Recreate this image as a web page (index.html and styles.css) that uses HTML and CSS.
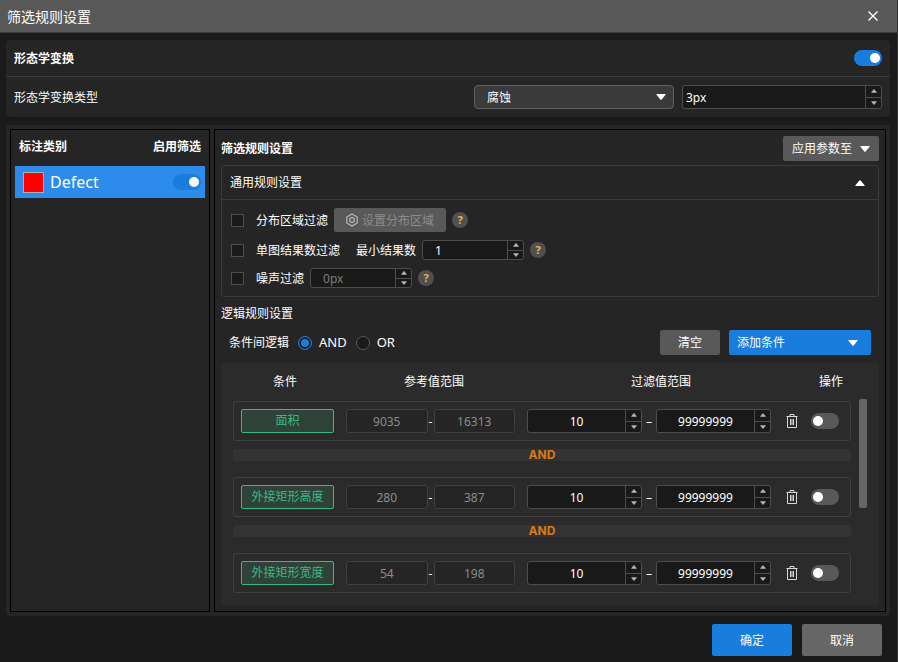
FILE: index.html
```html
<!DOCTYPE html>
<html lang="zh-CN">
<head>
    <meta charset="UTF-8">
    <title>筛选规则设置</title>
    <link rel="stylesheet" href="styles.css">
</head>
<body>

<svg class="defs" width="0" height="0" aria-hidden="true">
    <symbol id="down" viewBox="0 0 10 6"><path d="M1 0h8q1 0 .5 .8L5.7 5.5q-.7 .7-1.4 0L.5 .8Q0 0 1 0z"/></symbol>
    <symbol id="up" viewBox="0 0 10 6"><path d="M1 6h8q1 0 .5-.8L5.7 .5q-.7-.7-1.4 0L.5 5.2Q0 6 1 6z"/></symbol>
    <symbol id="trash" viewBox="0 0 12 14">
        <path d="M.5 2.5h11M4 2.5v-2h4v2M1.5 2.5v11h9v-11M4.5 5v6M6 5v6M7.5 5v6" fill="none" stroke="#d8d8d8"/>
    </symbol>
</svg>

<header class="titlebar">
    <h1>筛选规则设置</h1>
    <button class="close" aria-label="关闭">
        <svg width="10" height="10" viewBox="0 0 10 10"><path d="M.5 .5l9 9M9.5 .5l-9 9" fill="none" stroke="#fff" stroke-width="1.4"/></svg>
    </button>
</header>

<main class="content">

    <section class="panel morph">
        <div class="morph-row morph-head">
            <label class="bold" for="morphOn">形态学变换</label>
            <input id="morphOn" class="toggle" type="checkbox" checked>
        </div>
        <div class="morph-row morph-type">
            <label class="grow" for="morphType">形态学变换类型</label>
            <div class="dropdown">
                <select id="morphType">
                    <option>腐蚀</option>
                    <option>膨胀</option>
                </select>
                <svg class="arrow"><use href="#down"/></svg>
            </div>
            <div class="spin spin-size">
                <input type="text" value="3px" aria-label="大小">
                <div class="steps">
                    <button aria-label="增加"><svg><use href="#up"/></svg></button>
                    <button aria-label="减少"><svg><use href="#down"/></svg></button>
                </div>
            </div>
        </div>
    </section>

    <section class="panel work">

        <div class="box classes">
            <div class="classes-head bold">
                <span>标注类别</span>
                <span>启用筛选</span>
            </div>
            <div class="class-item">
                <span class="swatch"></span>
                <label class="class-name" for="defectOn">Defect</label>
                <input id="defectOn" class="toggle" type="checkbox" checked>
            </div>
        </div>

        <div class="box rules">
            <div class="rules-head">
                <h2>筛选规则设置</h2>
                <button class="btn apply">应用参数至 <svg class="arrow"><use href="#down"/></svg></button>
            </div>

            <div class="group">
                <div class="group-head">
                    <span>通用规则设置</span>
                    <svg class="arrow"><use href="#up"/></svg>
                </div>
                <div class="group-body">
                    <div class="rule">
                        <input id="area" class="check" type="checkbox">
                        <label for="area">分布区域过滤</label>
                        <button class="btn region" disabled>
                            <svg class="hexagon" viewBox="0 0 12 14"><path d="M6 1l5.200 3v6L6 13 .8 10V4z"/><circle cx="6" cy="7" r="2.400"/></svg>
                            设置分布区域
                        </button>
                        <button class="help" aria-label="帮助">?</button>
                    </div>
                    <div class="rule">
                        <input id="count" class="check" type="checkbox">
                        <label for="count">单图结果数过滤</label>
                        <label class="min-label" for="minCount">最小结果数</label>
                        <div class="spin spin-small">
                            <input id="minCount" type="text" value="1">
                            <div class="steps">
                                <button aria-label="增加"><svg><use href="#up"/></svg></button>
                                <button aria-label="减少"><svg><use href="#down"/></svg></button>
                            </div>
                        </div>
                        <button class="help" aria-label="帮助">?</button>
                    </div>
                    <div class="rule">
                        <input id="noise" class="check" type="checkbox">
                        <label for="noise">噪声过滤</label>
                        <div class="spin spin-small">
                            <input type="text" value="0px" aria-label="噪声大小" disabled>
                            <div class="steps">
                                <button aria-label="增加"><svg><use href="#up"/></svg></button>
                                <button aria-label="减少"><svg><use href="#down"/></svg></button>
                            </div>
                        </div>
                        <button class="help" aria-label="帮助">?</button>
                    </div>
                </div>
            </div>

            <h3>逻辑规则设置</h3>

            <div class="logic">
                <span>条件间逻辑</span>
                <label class="choice"><input class="radio" name="logic" type="radio" checked>AND</label>
                <label class="choice"><input class="radio" name="logic" type="radio">OR</label>
                <span class="grow"></span>
                <button class="btn clear">清空</button>
                <button class="btn primary add">添加条件 <svg class="arrow"><use href="#down"/></svg></button>
            </div>

            <div class="conditions">
                <table>
                    <thead>
                        <tr>
                            <th>条件</th>
                            <th>参考值范围</th>
                            <th>过滤值范围</th>
                            <th>操作</th>
                        </tr>
                    </thead>
                    <tbody>
                        <tr class="cond">
                            <td class="tag">面积</td>
                            <td class="ref"><input type="text" value="9035" aria-label="参考最小值" disabled><span>-</span><input type="text" value="16313" aria-label="参考最大值" disabled></td>
                            <td class="filter">
                                <div class="spin">
                                    <input type="text" value="10" aria-label="最小值">
                                    <div class="steps">
                                        <button aria-label="增加"><svg><use href="#up"/></svg></button>
                                        <button aria-label="减少"><svg><use href="#down"/></svg></button>
                                    </div>
                                </div>
                                <span>–</span>
                                <div class="spin">
                                    <input type="text" value="99999999" aria-label="最大值">
                                    <div class="steps">
                                        <button aria-label="增加"><svg><use href="#up"/></svg></button>
                                        <button aria-label="减少"><svg><use href="#down"/></svg></button>
                                    </div>
                                </div>
                            </td>
                            <td class="ops">
                                <button class="delete" aria-label="删除"><svg><use href="#trash"/></svg></button>
                                <input class="toggle" type="checkbox" aria-label="启用">
                            </td>
                        </tr>
                        <tr class="join"><td colspan="4">AND</td></tr>
                        <tr class="cond">
                            <td class="tag">外接矩形高度</td>
                            <td class="ref"><input type="text" value="280" aria-label="参考最小值" disabled><span>-</span><input type="text" value="387" aria-label="参考最大值" disabled></td>
                            <td class="filter">
                                <div class="spin">
                                    <input type="text" value="10" aria-label="最小值">
                                    <div class="steps">
                                        <button aria-label="增加"><svg><use href="#up"/></svg></button>
                                        <button aria-label="减少"><svg><use href="#down"/></svg></button>
                                    </div>
                                </div>
                                <span>–</span>
                                <div class="spin">
                                    <input type="text" value="99999999" aria-label="最大值">
                                    <div class="steps">
                                        <button aria-label="增加"><svg><use href="#up"/></svg></button>
                                        <button aria-label="减少"><svg><use href="#down"/></svg></button>
                                    </div>
                                </div>
                            </td>
                            <td class="ops">
                                <button class="delete" aria-label="删除"><svg><use href="#trash"/></svg></button>
                                <input class="toggle" type="checkbox" aria-label="启用">
                            </td>
                        </tr>
                        <tr class="join"><td colspan="4">AND</td></tr>
                        <tr class="cond">
                            <td class="tag">外接矩形宽度</td>
                            <td class="ref"><input type="text" value="54" aria-label="参考最小值" disabled><span>-</span><input type="text" value="198" aria-label="参考最大值" disabled></td>
                            <td class="filter">
                                <div class="spin">
                                    <input type="text" value="10" aria-label="最小值">
                                    <div class="steps">
                                        <button aria-label="增加"><svg><use href="#up"/></svg></button>
                                        <button aria-label="减少"><svg><use href="#down"/></svg></button>
                                    </div>
                                </div>
                                <span>–</span>
                                <div class="spin">
                                    <input type="text" value="99999999" aria-label="最大值">
                                    <div class="steps">
                                        <button aria-label="增加"><svg><use href="#up"/></svg></button>
                                        <button aria-label="减少"><svg><use href="#down"/></svg></button>
                                    </div>
                                </div>
                            </td>
                            <td class="ops">
                                <button class="delete" aria-label="删除"><svg><use href="#trash"/></svg></button>
                                <input class="toggle" type="checkbox" aria-label="启用">
                            </td>
                        </tr>
                    </tbody>
                </table>
                <div class="scrollbar"><div class="thumb"></div></div>
            </div>
        </div>
    </section>
</main>

<footer class="footer">
    <button class="btn primary">确定</button>
    <button class="btn cancel">取消</button>
</footer>

</body>
</html>
```

FILE: styles.css
```css
*{
    box-sizing: border-box;
}

body{
    margin: 0;
    min-height: 100vh;
    display: flex;
    flex-direction: column;
    background-color: #1a1a1a;
    border-right: 1px solid #333333;
    color: #ffffff;
    font-family: "Noto Sans", "Noto Sans CJK SC", sans-serif;
    font-size: 12px;
    line-height: 17px;
}

h1, h2, h3{
    margin: 0;
    font-size: 12px;
}

button, input, select{
    margin: 0;
    padding: 0;
    border: 0;
    font: inherit;
    color: inherit;
    background: none;
}

svg{
    display: block;
    fill: currentColor;
}

.defs{
    position: absolute;
}

.bold{
    font-weight: bold;
}

.grow{
    flex: 1;
}

.arrow{
    width: 10px;
    height: 6px;
}

/* title bar */

.titlebar{
    display: flex;
    align-items: center;
    justify-content: space-between;
    height: 33px;
    padding: 0 12px 0 7px;
    background-color: #595959;
    border-bottom: 1px solid #3d3d3d;
}

.titlebar h1{
    font-size: 14px;
    font-weight: normal;
}

.close{
    display: grid;
    place-items: center;
    width: 24px;
    height: 24px;
}

.content{
    flex: 1;
    display: flex;
    flex-direction: column;
    gap: 8px;
    padding: 7px 7px 0 6px;
}

.panel{
    background-color: #252525;
    border-radius: 4px;
}

/* morphology */

.morph-row{
    display: flex;
    align-items: center;
    gap: 8px;
    padding: 0 8px;
}

.morph-head{
    justify-content: space-between;
    height: 37px;
    border-bottom: 1px solid #3a3a3a;
}

.morph-type{
    height: 40px;
}

.dropdown{
    position: relative;
    width: 200px;
}

.dropdown select{
    display: block;
    appearance: none;
    width: 100%;
    height: 24px;
    padding: 0 28px 0 12px;
    border: 1px solid #606060;
    border-radius: 4px;
    background-color: #3a3a3a;
}

.dropdown .arrow{
    position: absolute;
    right: 8px;
    top: 9px;
    pointer-events: none;
}

/* number box with step buttons */

.spin{
    display: flex;
    height: 24px;
    border: 1px solid #4d4d4d;
    border-radius: 3px;
    background-color: #191919;
}

.spin input{
    flex: 1;
    width: 0;
    min-width: 0;
    text-align: center;
}

.spin input:disabled{
    color: #7d7d7d;
}

.steps{
    display: flex;
    flex-direction: column;
    width: 16px;
    border-left: 1px solid #4d4d4d;
    color: #b4b4b4;
}

.steps button{
    flex: 1;
    display: grid;
    place-items: center;
}

.steps button + button{
    border-top: 1px solid #4d4d4d;
}

.steps svg{
    width: 6px;
    height: 4px;
}

.spin-size{
    width: 200px;
}

.spin-size input{
    padding-left: 3px;
    text-align: left;
}

.spin-small{
    width: 102px;
    height: 20px;
}

.spin-small input{
    padding-left: 12px;
    text-align: left;
}

/* switches and ticks */

.toggle{
    appearance: none;
    display: flex;
    align-items: center;
    width: 28px;
    height: 16px;
    padding: 0 2px;
    border-radius: 8px;
    background-color: #595959;
}

.toggle::before{
    content: "";
    width: 10px;
    height: 10px;
    border-radius: 50%;
    background-color: #ffffff;
}

.toggle:checked{
    justify-content: flex-end;
    background-color: #187ddc;
}

.check{
    appearance: none;
    width: 13px;
    height: 13px;
    margin-right: 6px;
    border: 1px solid #4d4d4d;
    background-color: #1a1a1a;
}

.radio{
    appearance: none;
    width: 14px;
    height: 14px;
    border: 1px solid #5a5a5a;
    border-radius: 50%;
    background-color: #1a1a1a;
}

.radio:checked{
    border-color: #187ddc;
    background-color: #187ddc;
    box-shadow: inset 0 0 0 2px #1a1a1a;
}

.btn{
    display: flex;
    align-items: center;
    justify-content: center;
    height: 25px;
    border-radius: 2px;
    background-color: #595959;
}

.primary{
    background-color: #187ddc;
}

/* work area */

.work{
    flex: 1;
    display: flex;
    gap: 4px;
    padding: 4px;
}

.box{
    border: 1px solid #000000;
}

.classes{
    flex: none;
    width: 200px;
    padding: 0 4px;
}

.classes-head{
    display: flex;
    align-items: center;
    justify-content: space-between;
    height: 32px;
    margin-bottom: 4px;
    padding: 0 4px;
}

.class-item{
    display: flex;
    align-items: center;
    gap: 6px;
    height: 32px;
    padding: 0 4px 0 8px;
    background-color: #2d8ceb;
}

.swatch{
    width: 21px;
    height: 21px;
    border: 1px solid #b0b0b0;
    background-color: #ff0000;
}

.class-name{
    flex: 1;
    font-size: 16px;
}

.rules{
    flex: 1;
    min-width: 0;
    padding: 6px;
}

.rules-head{
    display: flex;
    align-items: center;
    justify-content: space-between;
}

.apply{
    gap: 8px;
    width: 96px;
}

.group{
    margin-top: 4px;
    border: 1px solid #3a3a3a;
    border-radius: 3px;
}

.group-head{
    display: flex;
    align-items: center;
    justify-content: space-between;
    height: 34px;
    padding: 0 13px 0 8px;
    border-bottom: 1px solid #3a3a3a;
}

.group-body{
    display: flex;
    flex-direction: column;
    gap: 8px;
    padding: 8px 9px;
}

.rule{
    display: flex;
    align-items: center;
    gap: 6px;
}

.min-label{
    margin-left: 10px;
}

.region{
    gap: 4px;
    width: 112px;
    height: 24px;
    color: #8c8c8c;
}

.hexagon{
    width: 12px;
    height: 14px;
    fill: none;
    stroke: #b8b8b8;
    stroke-width: 1.2;
}

.help{
    width: 16px;
    height: 16px;
    border-radius: 50%;
    background-color: #505050;
    color: #e8b84a;
    font-size: 11px;
    font-weight: bold;
    line-height: 16px;
}

.rules h3{
    font-weight: normal;
    line-height: 33px;
}

.logic{
    display: flex;
    align-items: center;
    gap: 9px;
    padding: 0 8px;
}

.choice{
    display: flex;
    align-items: center;
    gap: 7px;
    font-size: 13px;
}

.clear{
    width: 60px;
}

.add{
    justify-content: space-between;
    width: 142px;
    padding: 0 13px 0 8px;
}

/* conditions */

.conditions{
    display: flex;
    margin-top: 8px;
    padding-right: 12px;
    border-radius: 4px;
    background-color: #2b2b2b;
}

.conditions table{
    flex: 1;
    display: block;
}

thead, tbody{
    display: block;
}

th, td{
    padding: 0;
    font-weight: normal;
}

thead tr{
    display: grid;
    grid-template-columns: 128px 170px 1fr 56px;
    align-items: center;
    height: 36px;
}

tbody{
    padding: 2px 8px 12px 12px;
}

.cond{
    display: grid;
    grid-template-columns: 93px 169px 1fr 60px;
    gap: 12px;
    padding: 7px;
    border: 1px solid #404040;
    border-radius: 3px;
}

.tag{
    border: 1px solid #3cb983;
    border-radius: 2px;
    background-color: #2f4239;
    color: #3cb983;
    line-height: 22px;
    text-align: center;
}

.ref, .filter, .ops{
    display: flex;
    align-items: center;
}

.ref span{
    width: 6px;
    text-align: center;
}

.ref input{
    flex: 1;
    width: 0;
    min-width: 0;
    height: 24px;
    border: 1px solid #404040;
    border-radius: 3px;
    background-color: #252525;
    color: #8c8c8c;
    text-align: center;
}

.filter span{
    width: 14px;
    text-align: center;
}

.filter .spin{
    flex: 1;
}

.ops{
    justify-content: space-between;
    padding: 0 4px 0 3px;
}

.delete svg{
    width: 12px;
    height: 14px;
}

.join{
    display: block;
    margin: 8px 0 16px;
    border-radius: 2px;
    background-color: #333335;
}

.join td{
    display: block;
    color: #d97a16;
    font-family: Inter, sans-serif;
    font-size: 12px;
    font-weight: bold;
    line-height: 12px;
    text-align: center;
}

.scrollbar{
    width: 8px;
    padding-top: 36px;
}

.thumb{
    height: 109px;
    border-radius: 2px;
    background-color: #666666;
}

.footer{
    display: flex;
    justify-content: flex-end;
    gap: 10px;
    padding: 8px 15px 6px;
}

.footer .btn{
    width: 80px;
    height: 32px;
}

.footer .cancel{
    background-color: #666666;
}
```
